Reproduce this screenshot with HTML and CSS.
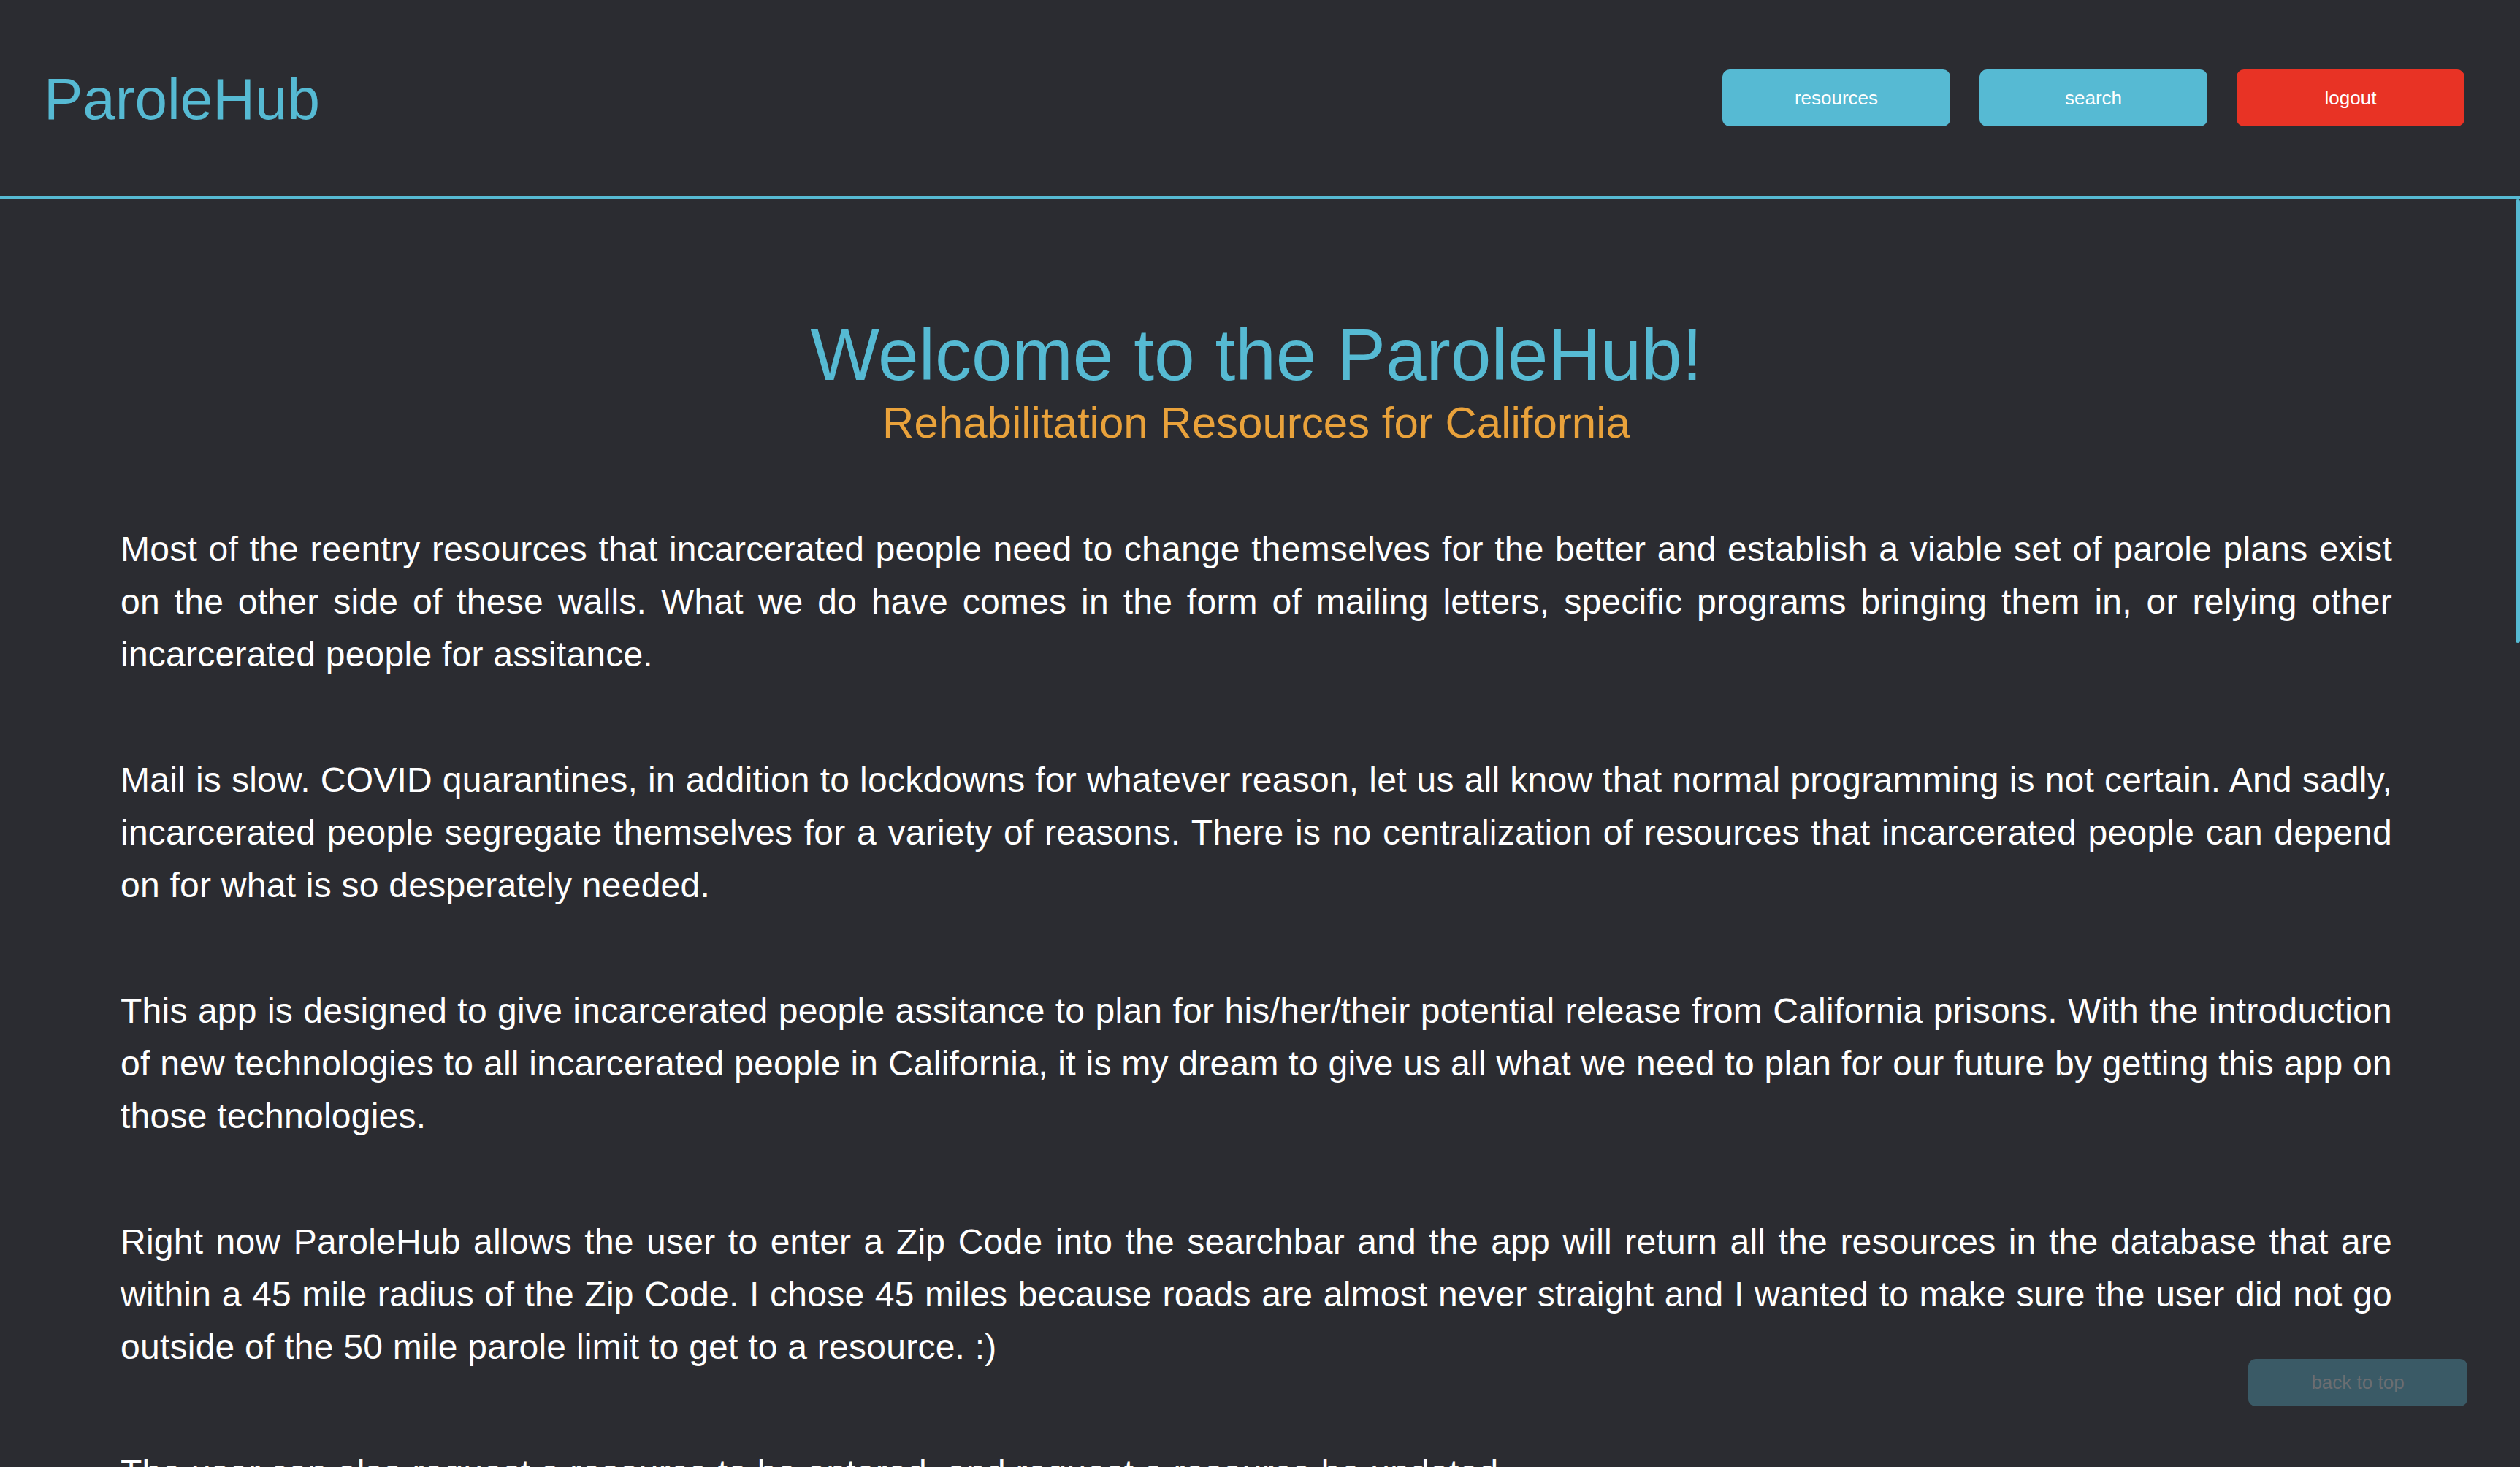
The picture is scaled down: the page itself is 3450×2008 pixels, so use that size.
FILE: index.html
```html
<!DOCTYPE html>
<html lang="en">
<head>
<meta charset="utf-8">
<title>ParoleHub</title>
<link rel="stylesheet" href="styles.css">
</head>
<body>
<div class="app">
  <header class="topbar">
    <div class="logo">ParoleHub</div>
    <nav class="nav">
      <button class="btn btn-blue">resources</button>
      <button class="btn btn-blue">search</button>
      <button class="btn btn-red">logout</button>
    </nav>
  </header>
  <main class="content">
    <h1 class="title">Welcome to the ParoleHub!</h1>
    <h2 class="subtitle">Rehabilitation Resources for California</h2>
    <p class="para">Most of the reentry resources that incarcerated people need to change themselves for the better and establish a viable set of parole plans exist on the other side of these walls. What we do have comes in the form of mailing letters, specific programs bringing them in, or relying other incarcerated people for assitance.</p>
    <p class="para">Mail is slow. COVID quarantines, in addition to lockdowns for whatever reason, let us all know that normal programming is not certain. And sadly, incarcerated people segregate themselves for a variety of reasons. There is no centralization of resources that incarcerated people can depend on for what is so desperately needed.</p>
    <p class="para">This app is designed to give incarcerated people assitance to plan for his/her/their potential release from California prisons. With the introduction of new technologies to all incarcerated people in California, it is my dream to give us all what we need to plan for our future by getting this app on those technologies.</p>
    <p class="para">Right now ParoleHub allows the user to enter a Zip Code into the searchbar and the app will return all the resources in the database that are within a 45 mile radius of the Zip Code. I chose 45 miles because roads are almost never straight and I wanted to make sure the user did not go outside of the 50 mile parole limit to get to a resource. :)</p>
    <p class="para">The user can also request a resource to be entered, and request a resource be updated.</p>
  </main>
  <div class="scroll-thumb"></div>
  <button class="back-top">back to top</button>
</div>
</body>
</html>
```
FILE: styles.css
```css
html, body {
  margin: 0;
  height: 100%;
  overflow: hidden;
  background: #2b2c31;
  font-family: "Liberation Sans", Arial, Helvetica, sans-serif;
}

.app {
  position: relative;
  height: 100vh;
  display: flex;
  flex-direction: column;
}

.topbar {
  flex: 0 0 auto;
  height: 268px;
  border-bottom: 4px solid #56bad3;
  display: flex;
  align-items: center;
  justify-content: space-between;
  padding: 0 76px 0 60px;
}

.logo {
  font-size: 80px;
  line-height: 1;
  color: #56bad3;
  padding-top: 3px;
}

.nav {
  display: flex;
  gap: 40px;
}

.btn {
  width: 312px;
  height: 78px;
  border: none;
  border-radius: 10px;
  color: #ffffff;
  font-family: "Liberation Sans", Arial, sans-serif;
  font-size: 26px;
  padding: 0;
}

.btn-blue {
  background: #56bad3;
}

.btn-red {
  background: #e83325;
}

.content {
  flex: 1 1 auto;
  overflow: hidden;
  padding: 158px 175px 0 165px;
}

.title {
  margin: 0;
  text-align: center;
  font-size: 100px;
  line-height: 110px;
  font-weight: normal;
  color: #56bad3;
}

.subtitle {
  margin: 4px 0 0;
  text-align: center;
  font-size: 60px;
  line-height: 70px;
  font-weight: normal;
  color: #e9a23b;
}

.para {
  margin: 0 0 100px;
  color: #ffffff;
  font-size: 48px;
  line-height: 72px;
  letter-spacing: 0.25px;
  text-align: justify;
}

.subtitle + .para {
  margin-top: 102px;
}

.scroll-thumb {
  position: absolute;
  right: 0;
  top: 273px;
  width: 6px;
  height: 607px;
  border-radius: 3px;
  background: #56bad3;
}

.back-top {
  position: absolute;
  right: 72px;
  bottom: 83px;
  width: 300px;
  height: 65px;
  border: none;
  border-radius: 10px;
  background: #3a5a66;
  color: #6b6e72;
  font-family: "Liberation Sans", Arial, sans-serif;
  font-size: 26px;
  padding: 0;
}
```
